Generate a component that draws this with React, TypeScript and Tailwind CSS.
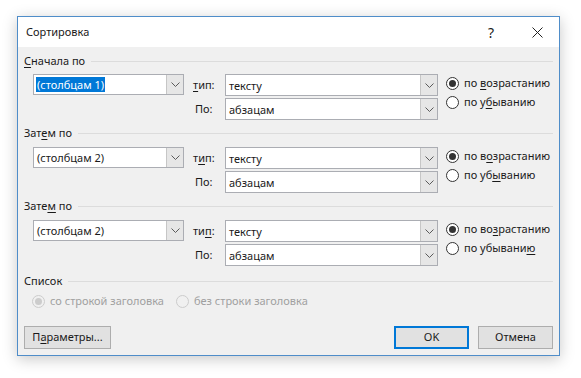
import React from 'react'

const FONT = "font-['Noto_Sans','Open_Sans',sans-serif]"

function Chevron() {
  return (
    <svg width="9" height="5" viewBox="0 0 9 5">
      <path d="M0.5 0.5 L4.5 4.5 L8.5 0.5" fill="none" stroke="#5a5a5a" strokeWidth="1" />
    </svg>
  )
}

function U({ children }: { children: React.ReactNode }) {
  return <span className="underline underline-offset-[2px] decoration-[1px]">{children}</span>
}

function Combo({ value, wide, selected }: { value: string; wide?: boolean; selected?: boolean }) {
  return (
    <div
      className={
        wide
          ? 'flex h-[22px] w-[213px] border border-[#abadb3] bg-white'
          : 'flex h-[21px] w-[151px] border border-[#abadb3] bg-white'
      }
    >
      <div className="flex flex-1 items-center pl-[2px]">
        <span className={selected ? 'bg-[#0078d7] px-[1px] leading-[15px] text-white' : 'px-[1px] leading-[15px]'}>
          {value}
        </span>
      </div>
      <div className="flex w-[17px] items-center justify-center border-l border-[#c6c6c6] bg-[#e6e6e6]">
        <Chevron />
      </div>
    </div>
  )
}

function Radio({ checked, disabled, label }: { checked?: boolean; disabled?: boolean; label: React.ReactNode }) {
  return (
    <div className="flex h-[19px] items-center gap-[5px] whitespace-nowrap">
      <div
        className={
          disabled
            ? 'flex h-[13px] w-[13px] items-center justify-center rounded-full border border-[#cccccc] bg-[#f0f0f0]'
            : 'flex h-[13px] w-[13px] items-center justify-center rounded-full border border-[#333333] bg-white'
        }
      >
        {checked && (
          <div className={disabled ? 'h-[7px] w-[7px] rounded-full bg-[#cccccc]' : 'h-[7px] w-[7px] rounded-full bg-[#333333]'} />
        )}
      </div>
      <span className={disabled ? 'text-[#a0a0a0]' : ''}>{label}</span>
    </div>
  )
}

function Header({ children }: { children: React.ReactNode }) {
  return (
    <div className="flex h-[16px] items-center">
      <span>{children}</span>
      <div className="ml-[6px] h-px flex-1 bg-[#dcdcdc]" />
    </div>
  )
}

type Level = {
  title: React.ReactNode
  column: string
  typeLabel: React.ReactNode
  asc: React.ReactNode
  desc: React.ReactNode
  selected?: boolean
}

const levels: Level[] = [
  {
    title: <><U>С</U>начала по</>,
    column: '(столбцам 1)',
    typeLabel: <><U>т</U>ип:</>,
    asc: <>по <U>в</U>озрастанию</>,
    desc: <>по у<U>б</U>ыванию</>,
    selected: true,
  },
  {
    title: <>Зат<U>е</U>м по</>,
    column: '(столбцам 2)',
    typeLabel: <>т<U>и</U>п:</>,
    asc: <>по в<U>о</U>зрастанию</>,
    desc: <>по уб<U>ы</U>ванию</>,
  },
  {
    title: <>Зате<U>м</U> по</>,
    column: '(столбцам 2)',
    typeLabel: <>ти<U>п</U>:</>,
    asc: <>по во<U>з</U>растанию</>,
    desc: <>по убывани<U>ю</U></>,
  },
]

export default function App() {
  return (
    <div className={`h-[378px] w-[581px] overflow-hidden bg-white pl-[17px] pt-[16px] text-[11px] text-[#1a1a1a] ${FONT}`}>
      <div className="flex w-[543px] flex-col border border-[#4f8dc9] bg-[#f0f0f0] shadow-[0_3px_14px_rgba(0,0,0,0.22)]">
        {/* title bar */}
        <div className="flex h-[30px] items-center bg-white pl-[8px]">
          <span className="flex-1">Сортировка</span>
          <span className="mr-[38px] text-[14px]">?</span>
          <svg className="mr-[16px]" width="11" height="11" viewBox="0 0 11 11">
            <path d="M0.5 0.5 L10.5 10.5 M10.5 0.5 L0.5 10.5" stroke="#222" strokeWidth="1" fill="none" />
          </svg>
        </div>

        <div className="flex flex-col px-[6px] pb-[6px]">
          {levels.map((lv, i) => (
            <div key={i} className={i === 0 ? 'mt-[6px] flex flex-col' : 'mt-[5px] flex flex-col'}>
              <Header>{lv.title}</Header>
              <div className={i === 0 ? 'mt-[5px] flex' : 'mt-[6px] flex'}>
                <div className="ml-[9px]">
                  <Combo value={lv.column} selected={lv.selected} />
                </div>
                <div className="ml-[9px] flex w-[32px] flex-col">
                  <div className="flex h-[22px] items-center">{lv.typeLabel}</div>
                  <div className="mt-[2px] flex h-[22px] items-center pl-[2px]">По:</div>
                </div>
                <div className="flex flex-col gap-[2px]">
                  <Combo value="тексту" wide />
                  <Combo value="абзацам" wide />
                </div>
                <div className="ml-[8px] flex flex-col">
                  <Radio checked label={lv.asc} />
                  <Radio label={lv.desc} />
                </div>
              </div>
            </div>
          ))}

          <div className="mt-[7px]">
            <Header>Список</Header>
          </div>
          <div className="ml-[8px] mt-[3px] flex gap-[12px]">
            <Radio checked disabled label="со строкой заголовка" />
            <Radio disabled label="без строки заголовка" />
          </div>

          <div className="mt-[15px] flex">
            <button className="h-[23px] w-[87px] border border-[#adadad] bg-[#e1e1e1] text-center">
              П<U>а</U>раметры...
            </button>
            <div className="flex-1" />
            <button className="h-[23px] w-[75px] border-2 border-[#0078d7] bg-[#e1e1e1]">OK</button>
            <button className="ml-[9px] h-[23px] w-[75px] border border-[#adadad] bg-[#e1e1e1]">Отмена</button>
          </div>
        </div>
      </div>
    </div>
  )
}
